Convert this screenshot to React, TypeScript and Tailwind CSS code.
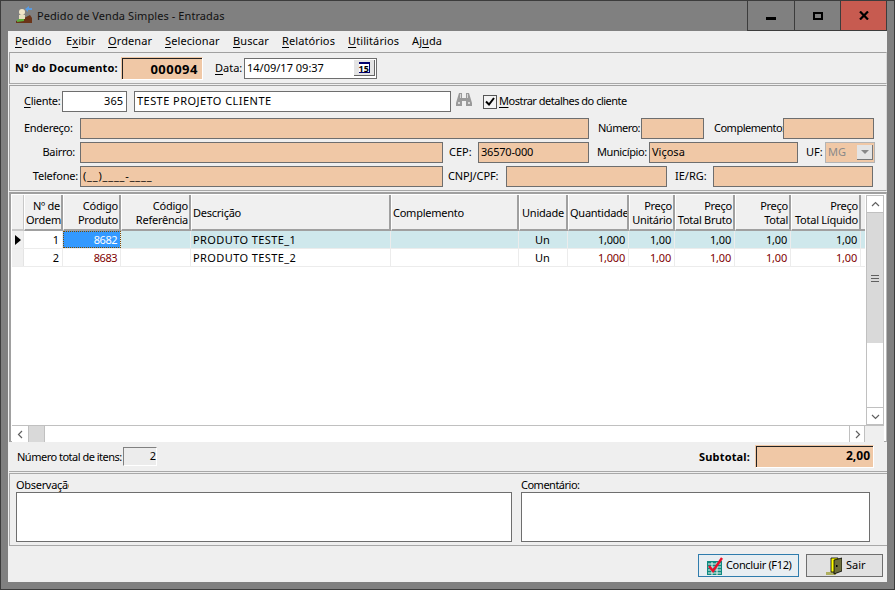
import type { ReactNode } from "react";

const peach = "bg-[#f0c8a6]";

const Field = ({ w, className = "", children }: { w: string; className?: string; children?: ReactNode }) => (
  <div className={`${w} h-[21px] shrink-0 border border-[#6e6e6e] px-[2px] leading-[18px] overflow-hidden whitespace-nowrap ${className}`}>
    {children}
  </div>
);

const U = ({ children }: { children: ReactNode }) => <span className="underline underline-offset-2">{children}</span>;

// sunken read-only box: light outer edge, dark inner top and left edge
const Sunken = ({ w, h, inner, children }: { w: string; h: string; inner: string; children: ReactNode }) => (
  <div className={`${w} ${h} shrink-0 ${peach} border-t border-l border-t-[#f0c8a6] border-l-[#f0c8a6] border-r border-b border-r-white border-b-white`}>
    <div className={`h-full border-t border-l border-[#222] text-right font-bold ${inner}`}>{children}</div>
  </div>
);

const columns = [
  { w: "w-[39px]", top: "Nº de", bottom: "Ordem", align: "text-right" },
  { w: "w-[58px]", top: "Código", bottom: "Produto", align: "text-right" },
  { w: "w-[70px]", top: "Código", bottom: "Referência", align: "text-right" },
  { w: "w-[200px]", top: "", bottom: "Descrição", align: "text-left" },
  { w: "w-[128px]", top: "", bottom: "Complemento", align: "text-left" },
  { w: "w-[49px]", top: "", bottom: "Unidade", align: "text-center" },
  { w: "w-[61px]", top: "", bottom: "Quantidade", align: "text-center" },
  { w: "w-[46px]", top: "Preço", bottom: "Unitário", align: "text-right" },
  { w: "w-[60px]", top: "Preço", bottom: "Total Bruto", align: "text-right" },
  { w: "w-[56px]", top: "Preço", bottom: "Total", align: "text-right" },
  { w: "w-[70px]", top: "Preço", bottom: "Total Líquido", align: "text-right" },
];

const rows = [
  { n: "1", code: "8682", desc: "PRODUTO TESTE_1", active: true },
  { n: "2", code: "8683", desc: "PRODUTO TESTE_2", active: false },
];

const HeaderCell = ({ w, top, bottom, align }: { w: string; top: string; bottom: string; align: string }) => (
  <div className={`${w} h-full shrink-0 bg-[#f0f0f0] border-r-2 border-b-2 border-[#a0a0a0] border-l border-l-white pl-[1px] pr-[1px] pt-[1px] flex flex-col justify-center leading-[14px] tracking-[-0.25px] overflow-hidden whitespace-nowrap ${align}`}>
    {top && <div>{top}</div>}
    <div>{bottom}</div>
  </div>
);

const Cell = ({ w, className = "", children }: { w: string; className?: string; children?: ReactNode }) => (
  <div className={`${w} h-full shrink-0 border-r border-[#ececec] pl-[2px] pr-[3px] leading-[17px] overflow-hidden whitespace-nowrap ${className}`}>
    {children}
  </div>
);

const Row = ({ n, code, desc, active }: { n: string; code: string; desc: string; active: boolean }) => {
  const num = active ? "text-black" : "text-[#800000]";
  return (
    <div className={`flex h-[18px] border-b border-[#ececec] ${active ? "bg-[#cfe8ec]" : "bg-white"}`}>
      <div className="w-[12px] h-full shrink-0 bg-[#f0f0f0] border-r border-[#e4e4e4] flex items-center justify-center">
        {active && <div className="w-0 h-0 border-y-[5px] border-y-transparent border-l-[6px] border-l-black" />}
      </div>
      <Cell w="w-[39px]" className="text-right bg-white">{n}</Cell>
      <Cell
        w="w-[58px]"
        className={active ? "text-right tracking-[-0.5px] text-white bg-[#3399ff] outline-1 outline-dotted -outline-offset-1 outline-[#7a4a00]" : "text-right tracking-[-0.5px] text-[#800000]"}
      >
        {code}
      </Cell>
      <Cell w="w-[70px]" />
      <Cell w="w-[200px]" className="tracking-[0.4px]">{desc}</Cell>
      <Cell w="w-[128px]" />
      <Cell w="w-[49px]" className="text-center">Un</Cell>
      <Cell w="w-[61px]" className={`text-right tracking-[-0.2px] ${num}`}>1,000</Cell>
      <Cell w="w-[46px]" className={`text-right tracking-[-0.2px] ${num}`}>1,00</Cell>
      <Cell w="w-[60px]" className={`text-right tracking-[-0.2px] ${num}`}>1,00</Cell>
      <Cell w="w-[56px]" className={`text-right tracking-[-0.2px] ${num}`}>1,00</Cell>
      <Cell w="w-[70px]" className={`text-right tracking-[-0.2px] ${num}`}>1,00</Cell>
      <Cell w="w-[5px]" />
    </div>
  );
};

const ScrollBtn = ({ d, className = "" }: { d: string; className?: string }) => (
  <div className={`bg-white flex items-center justify-center shrink-0 ${className}`}>
    <svg width="9" height="9" viewBox="0 0 9 9" fill="none" stroke="#606060" strokeWidth="1.2">
      <path d={d} />
    </svg>
  </div>
);

const TitleIcon = () => (
  <svg width="17" height="18" viewBox="0 0 17 18" className="shrink-0">
    <path d="M0 17 L0 15 L8 12 L14 9 L16 12 L16 17 Z" fill="#6b3418" />
    <path d="M1 14 L8 11 L8 15 L1 16 Z" fill="#5fae3c" />
    <circle cx="6" cy="6" r="3" fill="#f2e6c8" />
    <path d="M3 9 H9 V13 H3 Z" fill="#e8e0c0" />
    <path d="M9 3 L13 0 L13 2 L16 2 L16 4 L12 4 L12 6 Z" fill="#5a9be0" />
  </svg>
);

const Binoculars = () => (
  <svg width="16" height="15" viewBox="0 0 16 15" className="shrink-0">
    <path d="M3 1 H6 V6 H10 V1 H13 L16 11 V14 H10 V9 H6 V14 H0 V11 Z" fill="#9a9a9a" />
    <path d="M4 2 H5 V6 H4 Z M11 2 H12 V6 H11 Z M2 10 H4 V12 H2 Z M12 10 H14 V12 H12 Z" fill="#d8d8d8" />
  </svg>
);

const CheckIcon = () => (
  <svg width="16" height="18" viewBox="0 0 16 18" className="shrink-0">
    <rect x="0" y="4" width="15" height="14" fill="#0f8a80" />
    <path d="M1 7 H14 M1 10 H14 M1 13 H14 M1 16 H14 M5 5 V18 M10 5 V18" stroke="#e8f5f0" strokeWidth="1" />
    <path d="M2 9 L6 14 L15 1" fill="none" stroke="#e8102a" strokeWidth="2.4" />
  </svg>
);

const DoorIcon = () => (
  <svg width="16" height="18" viewBox="0 0 16 18" className="shrink-0">
    <path d="M0 15 H10 V18 H0 Z" fill="#b0b060" />
    <path d="M5 1 H12 V15 H5 Z" fill="#ffff00" stroke="#000" strokeWidth="0.8" />
    <path d="M8 3 L16 1 V14 L8 17 Z" fill="#6e6e3c" stroke="#000" strokeWidth="0.8" />
    <rect x="10" y="8" width="1.5" height="2" fill="#000" />
  </svg>
);

export default function App() {
  return (
    <div
      className="w-[895px] h-[590px] bg-[#808080] border border-[#3c3c3c] flex flex-col overflow-hidden text-[11px] text-black"
      style={{ fontFamily: '"Noto Sans", "Open Sans", sans-serif' }}
    >
      {/* title bar */}
      <div className="h-[30px] shrink-0 flex items-start pl-[15px] pr-[7px]">
        <div className="mt-[5px]"><TitleIcon /></div>
        <div className="ml-[4px] mt-[7px] text-[#111] leading-[16px] tracking-[0.08px]">Pedido de Venda Simples - Entradas</div>
        <div className="ml-auto flex h-[30px] border-b border-[#3c3c3c]">
          <div className="w-[47px] border-l border-[#3c3c3c] flex justify-center pt-[16px]">
            <div className="w-[10px] h-[3px] bg-black" />
          </div>
          <div className="w-[46px] border-l border-[#3c3c3c] flex justify-center pt-[11px]">
            <div className="w-[10px] h-[8px] border-2 border-black" />
          </div>
          <div className="w-[47px] border-x border-[#3c3c3c] bg-[#c75b50] flex justify-center pt-[10px]">
            <svg width="10" height="9" viewBox="0 0 10 9" stroke="#000" strokeWidth="2.2">
              <path d="M1 0.5 L9 8.5 M9 0.5 L1 8.5" />
            </svg>
          </div>
        </div>
      </div>

      {/* client area */}
      <div className="ml-[7px] mr-[7px] h-[551px] bg-[#efefef] flex flex-col shrink-0">
        {/* menu */}
        <div className="h-[21px] shrink-0 flex items-center pl-[7px] tracking-[0.1px]">
          <span className="w-[51px]"><U>P</U>edido</span>
          <span className="w-[42px]">E<U>x</U>ibir</span>
          <span className="w-[57px]"><U>O</U>rdenar</span>
          <span className="w-[68px]"><U>S</U>elecionar</span>
          <span className="w-[49px]"><U>B</U>uscar</span>
          <span className="w-[66px]"><U>R</U>elatórios</span>
          <span className="w-[64px]"><U>U</U>tilitários</span>
          <span>Aj<U>u</U>da</span>
        </div>

        {/* document */}
        <div className="h-[32px] shrink-0 ml-[1px] border-t border-t-[#a0a0a0] border-l border-l-[#a0a0a0] border-r border-r-[#d8d8d8] border-b border-b-[#a8a8a8] flex items-center pl-[5px]">
          <span className="font-bold w-[106px] whitespace-nowrap tracking-[0.2px]">Nº do Documento:</span>
          <Sunken w="w-[82px]" h="h-[23px]" inner="pr-[4px] text-[13px] tracking-[0.5px] leading-[20px]">000094</Sunken>
          <span className="ml-[12px] w-[29px]"><U>D</U>ata:</span>
          <div className="w-[133px] h-[21px] border border-[#6e6e6e] bg-white flex items-center pl-[2px]">
            <span className="whitespace-nowrap">14/09/17 09:37</span>
            <div className="ml-auto mr-[1px] w-[21px] h-[16px] bg-[#e4e4e4] border-r border-b border-[#666] flex items-center justify-center">
              <div className="w-[11px] h-[11px] border-t-2 border-r border-b border-[#00006e] bg-white text-[9px] leading-[9px] text-center font-bold">15</div>
            </div>
          </div>
        </div>

        {/* client */}
        <div className="h-[106px] shrink-0 mt-[1px] ml-[1px] border-t border-l border-[#a0a0a0] border-r border-r-[#d8d8d8] border-b border-b-[#a8a8a8] flex flex-col">
          <div className="flex items-center h-[21px] mt-[5px]">
            <span className="ml-[14px] w-[38px] tracking-[-0.3px]"><U>C</U>liente:</span>
            <Field w="w-[65px]" className="bg-white text-right pr-[3px]">365</Field>
            <Field w="w-[317px]" className="ml-[7px] bg-white tracking-[0.45px]">TESTE PROJETO CLIENTE</Field>
            <div className="ml-[5px] -mt-[4px]"><Binoculars /></div>
            <div className="ml-[11px] w-[14px] h-[14px] border border-[#555] bg-[#f4f4f4] flex items-center justify-center">
              <svg width="10" height="9" viewBox="0 0 10 9" fill="none" stroke="#000" strokeWidth="2">
                <path d="M1 4.5 L4 7.5 L9 1" />
              </svg>
            </div>
            <span className="ml-[2px] whitespace-nowrap tracking-[-0.5px]"><U>M</U>ostrar detalhes do cliente</span>
          </div>
          <div className="flex items-center h-[21px] mt-[6px]">
            <span className="ml-[14px] w-[56px] tracking-[-0.3px]">Endereço:</span>
            <Field w="w-[509px]" className={peach} />
            <span className="ml-[9px] w-[43px] tracking-[-0.5px]">Número:</span>
            <Field w="w-[63px]" className={peach} />
            <span className="ml-[10px] w-[69px] whitespace-nowrap tracking-[-0.5px]">Complemento:</span>
            <Field w="w-[91px]" className={peach} />
          </div>
          <div className="flex items-center h-[21px] mt-[3px]">
            <span className="w-[66px] ml-[4px] text-right pr-[5px] tracking-[-0.3px]">Bairro:</span>
            <Field w="w-[363px]" className={peach} />
            <span className="ml-[6px] w-[29px]">CEP:</span>
            <Field w="w-[111px]" className={`${peach} tracking-[-0.2px]`}>36570-000</Field>
            <span className="ml-[8px] w-[52px] whitespace-nowrap tracking-[-0.4px]">Município:</span>
            <Field w="w-[149px]" className={peach}>Viçosa</Field>
            <span className="ml-[8px] w-[19px]">UF:</span>
            <div className={`w-[50px] h-[21px] border border-[#b4b4b4] ${peach} flex items-center pl-[2px] text-[#8a8a8a]`}>
              MG
              <div className="ml-auto mr-[1px] w-[16px] h-[15px] bg-[#e4e4e4] border-r border-b border-[#777] flex items-center justify-center">
                <div className="w-0 h-0 border-x-[4px] border-x-transparent border-t-[4px] border-t-[#888]" />
              </div>
            </div>
          </div>
          <div className="flex items-center h-[21px] mt-[3px]">
            <span className="w-[66px] ml-[4px] text-right pr-[2px] tracking-[-0.2px]">Telefone:</span>
            <Field w="w-[363px]" className={`${peach} tracking-[0.8px]`}>(__)____-____</Field>
            <span className="ml-[5px] w-[58px] whitespace-nowrap tracking-[-0.1px]">CNPJ/CPF:</span>
            <Field w="w-[161px]" className={peach} />
            <span className="ml-[8px] w-[38px]">IE/RG:</span>
            <Field w="w-[160px]" className={peach} />
          </div>
        </div>

        {/* items grid */}
        <div className="h-[250px] shrink-0 mt-[1px] ml-[1px] border-t-2 border-l-2 border-[#a0a0a0] border-r border-r-[#b8b8b8] border-b border-b-[#a8a8a8] bg-white flex flex-col pl-[1px] pr-[2px] pt-[1px]">
          <div className="flex flex-1 min-h-0">
            <div className="w-[853px] shrink-0 flex flex-col overflow-hidden">
              <div className="flex h-[36px] shrink-0">
                <div className="w-[12px] h-full shrink-0 bg-[#f0f0f0] border-r border-b-2 border-[#c8c8c8]" />
                {columns.map((c) => (
                  <HeaderCell key={c.bottom} {...c} />
                ))}
                <div className="w-[5px] h-full shrink-0 bg-[#f0f0f0] border-b-2 border-[#a0a0a0]" />
              </div>
              {rows.map((r) => (
                <Row key={r.n} {...r} />
              ))}
            </div>
            <div className="w-[18px] shrink-0 ml-[1px] border border-[#c0c0c0] flex flex-col">
              <ScrollBtn d="M1 6 L4.5 2.5 L8 6" className="h-[17px] border-b border-[#c0c0c0]" />
              <div className="h-[130px] bg-[#d9d9d9] flex items-center justify-center">
                <div className="w-[8px] h-[7px] border-y border-[#606060] flex items-center">
                  <div className="w-full h-px bg-[#606060]" />
                </div>
              </div>
              <div className="flex-1 bg-white" />
              <ScrollBtn d="M1 3 L4.5 6.5 L8 3" className="h-[17px] border-t border-[#c0c0c0]" />
            </div>
          </div>
          <div className="h-[17px] shrink-0 flex border-t border-[#c0c0c0] -mb-px">
            <ScrollBtn d="M6 1 L2.5 4.5 L6 8" className="w-[17px] border-r border-[#c0c0c0]" />
            <div className="w-[16px] bg-[#d9d9d9] border-r border-[#c0c0c0]" />
            <div className="w-[804px] bg-white" />
            <ScrollBtn d="M3 1 L6.5 4.5 L3 8" className="w-[16px] border-x border-[#c0c0c0]" />
            <div className="flex-1 bg-[#efefef]" />
          </div>
        </div>

        {/* totals */}
        <div className="h-[30px] shrink-0 flex items-center ml-[1px] border-b border-[#a8a8a8] pl-[8px]">
          <span className="whitespace-nowrap w-[106px] pt-[2px] tracking-[-0.5px]">Número total de itens:</span>
          <div className="w-[34px] h-[19px] border-t border-l border-[#808080] border-r-white border-b-white border-r border-b bg-[#ececec] text-right leading-[15px]">2</div>
          <span className="ml-auto font-bold pt-[2px] tracking-[0.15px]">Subtotal:</span>
          <div className="ml-[5px] mr-[13px]">
            <Sunken w="w-[119px]" h="h-[23px]" inner="pr-[3px] text-[12px] leading-[18px]">2,00</Sunken>
          </div>
        </div>

        {/* notes */}
        <div className="h-[73px] shrink-0 mt-[1px] ml-[1px] border-t border-l border-b border-[#a8a8a8] flex pl-[6px]">
          <div className="w-[505px] flex flex-col">
            <div className="h-[18px] leading-[21px] w-[53px] overflow-hidden whitespace-nowrap tracking-[-0.3px]">Observação:</div>
            <div className="w-[496px] h-[50px] border border-[#6e6e6e] bg-white" />
          </div>
          <div className="flex flex-col">
            <div className="h-[18px] leading-[21px] tracking-[-0.5px]">Comentário:</div>
            <div className="w-[349px] h-[50px] border border-[#6e6e6e] bg-white" />
          </div>
        </div>

        {/* buttons */}
        <div className="flex-1 flex items-start justify-end pr-[4px] pt-[8px]">
          <button className="w-[101px] h-[23px] border border-[#2f7cad] bg-[#e8eef2] flex items-center pl-[8px] gap-[3px] whitespace-nowrap tracking-[-0.35px]">
            <CheckIcon />
            Concluir (F12)
          </button>
          <button className="ml-[7px] w-[77px] h-[23px] border border-[#6e6e6e] bg-[#e1e1e1] flex items-center pl-[19px] gap-[4px]">
            <DoorIcon />
            Sair
          </button>
        </div>
      </div>
    </div>
  );
}
